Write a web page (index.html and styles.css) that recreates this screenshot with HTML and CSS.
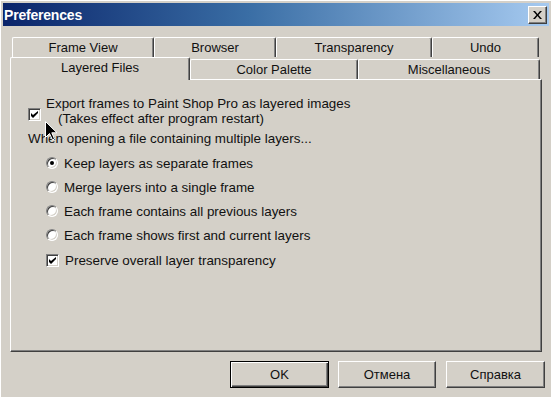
FILE: index.html
```html
<!DOCTYPE html>
<html>
<head>
<meta charset="utf-8">
<link rel="stylesheet" href="styles.css">
</head>
<body>
<div class="window">
  <div class="titlebar">
    <span class="title">Preferences</span>
    <span class="close"><svg width="9" height="8" viewBox="0 0 9 8"><path d="M0 0h2l2.5 3 2.5-3h2L5.5 4 9 8H7L4.5 5 2 8H0l3.5-4z" fill="#000"/></svg></span>
  </div>
  <div class="dialog">
    <div class="tabrow tabrow1">
      <div class="tab w142">Frame View</div>
      <div class="tab w122">Browser</div>
      <div class="tab w156">Transparency</div>
      <div class="tab w107">Undo</div>
    </div>
    <div class="tabrow tabrow2">
      <div class="tab selected w180">Layered Files</div>
      <div class="tab w168">Color Palette</div>
      <div class="tab w182">Miscellaneous</div>
    </div>
    <div class="panel">
      <div class="export">
        <span class="check first"><svg width="7" height="7" viewBox="0 0 7 7"><path d="M0 2v3l2 2 5-5V-0L2 4z" fill="#000"/></svg></span>
        <div class="export-text">
          <span class="line">Export frames to Paint Shop Pro as layered images</span>
          <span class="line indent">(Takes effect after program restart)</span>
        </div>
      </div>
      <div class="when">When opening a file containing multiple layers...</div>
      <div class="options">
        <div class="opt"><span class="radio on"></span><span>Keep layers as separate frames</span></div>
        <div class="opt"><span class="radio"></span><span>Merge layers into a single frame</span></div>
        <div class="opt"><span class="radio"></span><span>Each frame contains all previous layers</span></div>
        <div class="opt"><span class="radio"></span><span>Each frame shows first and current layers</span></div>
        <div class="opt optcheck"><span class="check"><svg width="7" height="7" viewBox="0 0 7 7"><path d="M0 2v3l2 2 5-5V-0L2 4z" fill="#000"/></svg></span><span>Preserve overall layer transparency</span></div>
      </div>
      <svg class="cursor" width="13" height="20" viewBox="0 0 13 20"><path d="M0.5 0.5V16.5L4.5 12.5L7.5 19L9.5 18L6.8 11.8H12Z" fill="#000" stroke="#fff" stroke-width="1"/></svg>
    </div>
    <div class="buttons">
      <div class="btn default"><span class="inner">OK</span></div>
      <div class="btn w98"><span class="inner">Отмена</span></div>
      <div class="btn"><span class="inner">Справка</span></div>
    </div>
  </div>
</div>
</body>
</html>
```
FILE: styles.css
```css
* { box-sizing: border-box; }
html, body { margin: 0; padding: 0; }
body {
  background: #d4d0c8;
  font-family: "Liberation Sans", Arial, sans-serif;
  font-size: 13px;
  color: #000;
}
.window {
  width: 551px;
  height: 397px;
  padding: 3px 2px 0 3px;
  background: #d4d0c8;
  box-shadow: inset 1px 1px 0 #ffffff;
  overflow: hidden;
}
.titlebar {
  height: 23px;
  background: linear-gradient(to right, #0a246a 0%, #3a6ea5 45%, #a6caf0 100%);
  display: flex;
  align-items: center;
  justify-content: space-between;
  padding: 0 2px 0 1px;
}
.title {
  color: #fff;
  font-weight: bold;
  font-size: 14px;
  letter-spacing: -0.2px;
}
.close {
  width: 19px;
  height: 18px;
  background: #d4d0c8;
  border: 1px solid;
  border-color: #fff #404040 #404040 #fff;
  box-shadow: inset -1px -1px 0 #808080;
  display: flex;
  align-items: center;
  justify-content: center;
}
.dialog {
  padding: 11px 4px 0 7px;
}
.tabrow { display: flex; }
.tabrow1 { margin-left: 2px; height: 20px; }
.tabrow2 { height: 22px; align-items: flex-end; }
.tab {
  height: 20px;
  line-height: 19px;
  text-align: center;
  border-top: 1px solid #fff;
  border-left: 1px solid #fff;
  border-right: 1px solid #404040;
  box-shadow: inset -1px 0 0 #808080;
  border-radius: 2px 2px 0 0;
  white-space: nowrap;
  color: #111;
}
.tab.selected {
  height: 23px;
  margin-bottom: -1px;
  position: relative;
  z-index: 1;
  background: #d4d0c8;
  line-height: 19px;
}
.w142 { width: 142px; }
.w122 { width: 122px; }
.w156 { width: 156px; }
.w107 { width: 107px; }
.w180 { width: 180px; }
.w168 { width: 168px; }
.w182 { width: 182px; }
.panel {
  position: relative;
  width: 532px;
  height: 273px;
  border-top: 1px solid #fff;
  border-left: 1px solid #fff;
  border-right: 1px solid #404040;
  border-bottom: 1px solid #404040;
  box-shadow: inset -1px -1px 0 #808080;
  padding: 16px 0 0 17px;
  font-size: 13.4px;
  color: #111;
}
.export { display: flex; align-items: flex-start; }
.export-text { margin-left: 5px; }
.line { display: block; line-height: 15px; white-space: nowrap; }
.indent { padding-left: 12px; }
.check {
  width: 13px;
  height: 13px;
  flex: none;
  background: #fff;
  border: 1px solid;
  border-color: #808080 #fff #fff #808080;
  box-shadow: inset 1px 1px 0 #404040, inset -1px -1px 0 #d4d0c8;
  display: flex;
  align-items: center;
  justify-content: center;
}
.check.first { margin-top: 12px; }
.when { line-height: 15px; white-space: nowrap; margin-top: 5px; }
.options { margin-top: 5px; padding-left: 18px; }
.opt {
  display: flex;
  align-items: center;
  height: 24px;
  white-space: nowrap;
}
.opt.optcheck { height: 26px; }
.radio {
  width: 12px;
  height: 12px;
  flex: none;
  border-radius: 50%;
  background: #fff;
  border: 1px solid;
  border-color: #808080 #fff #fff #808080;
  box-shadow: inset 1px 1px 0 #404040, inset -1px -1px 0 #d4d0c8;
  margin-right: 6px;
  display: flex;
  align-items: center;
  justify-content: center;
}
.radio.on::after {
  content: "";
  width: 4px;
  height: 4px;
  border-radius: 50%;
  background: #000;
}
.optcheck .check { margin-right: 6px; }
.cursor {
  position: absolute;
  left: 34px;
  top: 41px;
}
.buttons {
  display: flex;
  justify-content: flex-end;
  gap: 9px;
  margin-top: 9px;
}
.btn {
  width: 99px;
  height: 27px;
  border: 1px solid;
  border-color: #fff #404040 #404040 #fff;
  box-shadow: inset -1px -1px 0 #808080;
  display: flex;
  align-items: center;
  justify-content: center;
  color: #111;
}
.btn.w98 { width: 98px; margin-right: 1px; }
.btn.default {
  border: 1px solid #000;
  box-shadow: inset 1px 1px 0 #fff, inset -1px -1px 0 #404040, inset -2px -2px 0 #808080;
}
.inner { line-height: 16px; }
```
